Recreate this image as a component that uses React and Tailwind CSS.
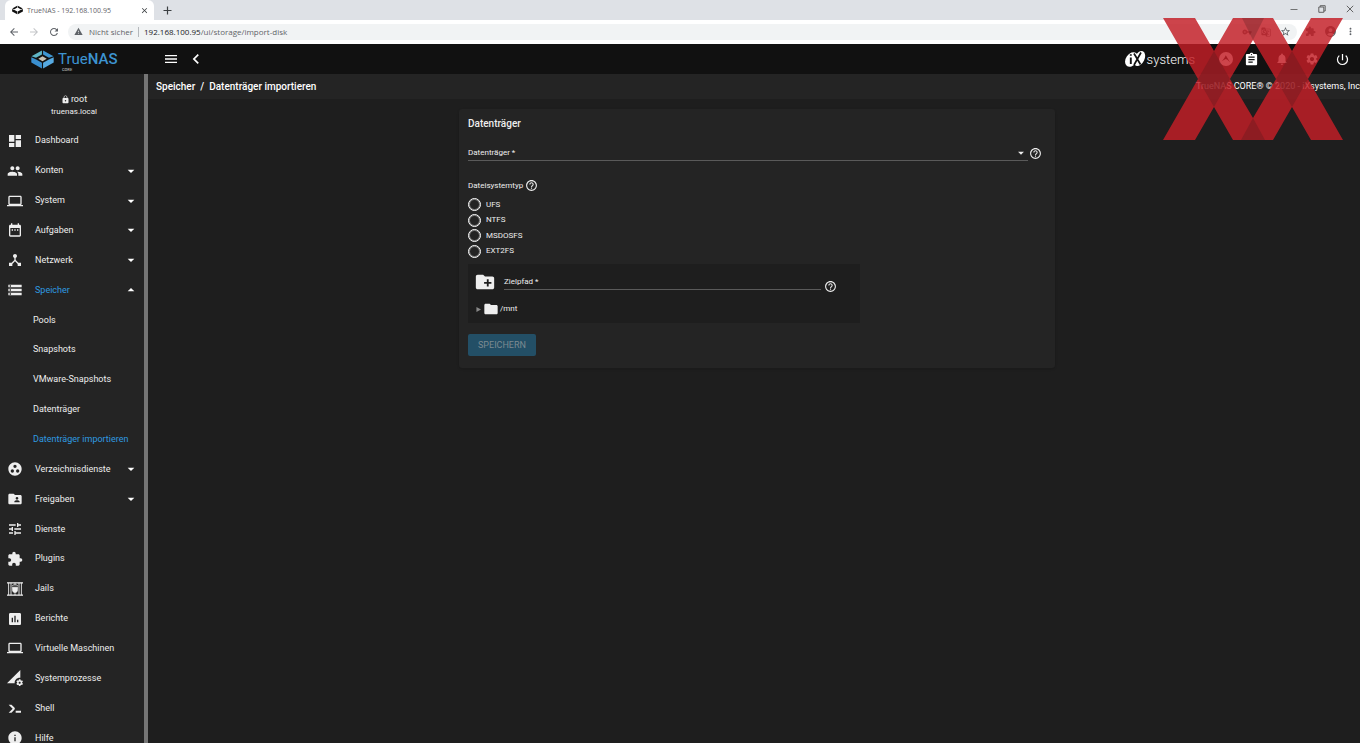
import { useState } from "react";
import {
  MdAccountCircle,
  MdArrowBack,
  MdArrowDropDown,
  MdArrowDropUp,
  MdArrowForward,
  MdAssessment,
  MdAssignment,
  MdChevronLeft,
  MdClose,
  MdComputer,
  MdCreateNewFolder,
  MdDashboard,
  MdDateRange,
  MdDeviceHub,
  MdExtension,
  MdFolder,
  MdFolderShared,
  MdGTranslate,
  MdGroupWork,
  MdHelpOutline,
  MdInfo,
  MdLock,
  MdMenu,
  MdMoreVert,
  MdNotifications,
  MdPeople,
  MdPermDataSetting,
  MdPowerSettingsNew,
  MdRefresh,
  MdSettings,
  MdStarBorder,
  MdStorage,
  MdTune,
  MdVpnKey,
  MdWarning,
} from "react-icons/md";

const JailIcon = ({ className }) => (
  <svg viewBox="0 0 18 16" fill="none" stroke="currentColor" className={className} aria-hidden="true">
    <path d="M0 1.200h18M0 14.800h18" strokeWidth="1.400" />
    <path d="M1.800 1v14M4.500 1v14M13.500 1v14M16.200 1v14" strokeWidth="1" />
    <path d="M9 1v2M9 13v2" strokeWidth="1" />
    <path d="M5.800 4.600C7 2.800 11 2.800 12.200 4.600" strokeWidth="1" />
    <path d="M6.200 6h5.600v2.800c0 2.200-1.400 3.400-2.800 3.400s-2.800-1.200-2.800-3.400z" fill="currentColor" strokeWidth="0.800" />
  </svg>
);

const ShellIcon = ({ className }) => (
  <svg viewBox="0 0 24 24" fill="currentColor" className={className} aria-hidden="true">
    <path d="M13 19v-3h8v3zM8.500 13 2.470 7H6.710L11.070 11.360a2.300 2.300 0 0 1 0 3.250L6.740 19H2.500z" />
  </svg>
);

const MENU = [
  { label: "Dashboard", icon: MdDashboard },
  { label: "Konten", icon: MdPeople, expandable: true },
  { label: "System", icon: MdComputer, expandable: true },
  { label: "Aufgaben", icon: MdDateRange, expandable: true },
  { label: "Netzwerk", icon: MdDeviceHub, expandable: true },
  { label: "Speicher", icon: MdStorage, expandable: true, open: true, active: true },
  { label: "Pools", child: true },
  { label: "Snapshots", child: true },
  { label: "VMware-Snapshots", child: true },
  { label: "Datenträger", child: true },
  { label: "Datenträger importieren", child: true, active: true },
  { label: "Verzeichnisdienste", icon: MdGroupWork, expandable: true },
  { label: "Freigaben", icon: MdFolderShared, expandable: true },
  { label: "Dienste", icon: MdTune },
  { label: "Plugins", icon: MdExtension },
  { label: "Jails", icon: JailIcon },
  { label: "Berichte", icon: MdAssessment },
  { label: "Virtuelle Maschinen", icon: MdComputer },
  { label: "Systemprozesse", icon: MdPermDataSetting },
  { label: "Shell", icon: ShellIcon },
  { label: "Hilfe", icon: MdInfo },
];

const FILESYSTEMS = ["UFS", "NTFS", "MSDOSFS", "EXT2FS"];

// Flat hexagonal ring of four facets around a small centre
const NasMark = ({ className, mono }) => (
  <svg viewBox="0 0 24 19" className={className} aria-hidden="true">
    <path d="M11.400 0v4.300L5.200 7.800.5 6z" fill={mono ? "#111" : "#5fb6c6"} />
    <path d="M12.600 0v4.300l6.200 3.500L23.500 6z" fill={mono ? "#111" : "#3f97d3"} />
    <path d="M0.300 7.200 5.400 9.400l6 3.600v5.800L0.300 12.600z" fill={mono ? "#111" : "#3a8fcf"} />
    <path d="M23.700 7.200 18.600 9.400l-6 3.600v5.800l11.100-6.200z" fill={mono ? "#111" : "#56a9e0"} />
    <path d="M12 6 16.400 8.700 12 11.400 7.600 8.700z" fill={mono ? "#fff" : "#c9c3b4"} />
  </svg>
);

const BrowserChrome = () => (
  <div className="shrink-0 font-['Open_Sans','Noto_Sans',sans-serif] text-[#5f6368]">
    <div className="flex h-5 items-center bg-[#dee1e6]">
      <div className="ml-[5px] flex h-full w-[149px] items-center rounded-t-md bg-white pr-[5px] pl-[7px]">
        <NasMark mono className="h-[10px] w-[11px]" />
        <span className="ml-1 flex-1 text-[7px] leading-none">TrueNAS - 192.168.100.95</span>
        <button type="button" aria-label="Tab schließen" className="text-[#3c4043]">
          <MdClose className="size-[9px]" />
        </button>
      </div>
      <button type="button" aria-label="Neuer Tab" className="ml-[9px] text-[#3c4043]">
        <svg viewBox="0 0 9 9" className="size-[9px]" stroke="currentColor" strokeWidth="1.200">
          <path d="M4.500 0.500v8M0.500 4.500h8" />
        </svg>
      </button>
      <div className="ml-auto flex h-full items-center gap-5 pr-[6px] pb-[3px] text-[#555]">
        <button type="button" aria-label="Minimieren">
          <svg viewBox="0 0 8 8" className="size-2" fill="none" stroke="currentColor" strokeWidth="0.800">
            <path d="M0.500 4.500h7" />
          </svg>
        </button>
        <button type="button" aria-label="Wiederherstellen">
          <svg viewBox="0 0 8 8" className="size-2" fill="none" stroke="currentColor" strokeWidth="0.900">
            <path d="M0.800 2h5v5.300h-5zM2.200 1.900V0.700h5v5.300H5.900" />
          </svg>
        </button>
        <button type="button" aria-label="Schließen">
          <svg viewBox="0 0 8 8" className="size-2" fill="none" stroke="currentColor" strokeWidth="0.900">
            <path d="M0.800 0.800l6.400 6.400M7.200 0.800 0.800 7.200" />
          </svg>
        </button>
      </div>
    </div>
    <div className="flex h-6 items-center bg-white pr-1 pb-px pl-2">
      <button type="button" aria-label="Zurück">
        <MdArrowBack className="size-3" />
      </button>
      <button type="button" aria-label="Vorwärts" className="ml-2 text-[#c3c5c8]">
        <MdArrowForward className="size-3" />
      </button>
      <button type="button" aria-label="Neu laden" className="ml-2">
        <MdRefresh className="size-3" />
      </button>
      <div className="ml-2 flex h-4 flex-1 items-center rounded-full bg-[#f1f3f4] pr-[6px] pl-[6px] text-[8px] leading-none">
        <MdWarning className="size-[9px]" />
        <span className="ml-[6px]">Nicht sicher</span>
        <span className="mx-[5px] h-[10px] w-px bg-[#b5b8bc]" />
        <span className="flex-1">
          <span className="text-[#202124]">192.168.100.95</span>/ui/storage/import-disk
        </span>
        <MdVpnKey className="size-[10px]" />
        <MdGTranslate className="ml-[9px] size-[10px]" />
        <MdStarBorder className="ml-[9px] size-[11px]" />
      </div>
      <div className="ml-2 flex items-center gap-2">
        <MdExtension className="size-[11px]" />
        <MdAccountCircle className="size-[13px]" />
        <MdMoreVert className="size-[11px]" />
      </div>
    </div>
  </div>
);

const IxLogo = () => (
  <div className="flex items-center gap-px text-white">
    <svg viewBox="0 0 22 18" className="h-[18px] w-[22px]" aria-hidden="true">
      <ellipse cx="7.500" cy="9.500" rx="5.600" ry="8" transform="rotate(35 7.500 9.500)" fill="white" />
      <ellipse cx="15.500" cy="8.500" rx="5" ry="8" transform="rotate(25 15.500 8.500)" fill="white" />
      <path d="M6.800 7.500v6.500M6.800 4.200v1.600" stroke="#111" strokeWidth="1.900" />
      <path d="M10 3.500l6.500 11M17 2.500 10 15" stroke="#111" strokeWidth="1.700" />
    </svg>
    <span className="text-[13px] leading-none font-light">systems</span>
  </div>
);

const TopBar = () => (
  <header className="flex h-[30px] shrink-0 items-center bg-[#111] pr-[10px] text-white">
    <a href="#dashboard" className="flex w-[163px] items-center pl-[31px]">
      <NasMark className="h-[19px] w-[23px]" />
      <span className="relative ml-1 text-[15px] leading-none text-[#3d94d1]">
        True<span className="font-medium">NAS</span>
        <span className="absolute top-4 left-1 text-[4px] leading-none font-medium text-[#b5b5b5]">CORE</span>
      </span>
    </a>
    <button type="button" aria-label="Menü">
      <MdMenu className="size-4" />
    </button>
    <button type="button" aria-label="Menü einklappen" className="ml-[7px]">
      <MdChevronLeft className="size-5" />
    </button>
    <div className="ml-auto flex items-center gap-4">
      <IxLogo />
      <div className="ml-2 flex items-center gap-4">
        <button type="button" aria-label="TrueCommand">
          <svg viewBox="0 0 14 14" className="size-[14px]">
            <circle cx="7" cy="7" r="7" fill="white" />
            <path d="M2 9.500C3.500 8.500 5 7 6.800 3.200l1.800 3 2.600 4.300-2.800-2.700-1.600-.8z" fill="#111" />
          </svg>
        </button>
        <button type="button" aria-label="Aufgaben" className="-ml-[5px]">
          <MdAssignment className="size-[15px]" />
        </button>
        <button type="button" aria-label="Benachrichtigungen">
          <MdNotifications className="size-[14px]" />
        </button>
        <button type="button" aria-label="Einstellungen">
          <MdSettings className="size-[14px]" />
        </button>
        <button type="button" aria-label="Ausschalten">
          <MdPowerSettingsNew className="size-[15px]" />
        </button>
      </div>
    </div>
  </header>
);

const MenuItem = ({ item }) => {
  const Icon = item.icon;
  const Arrow = item.open ? MdArrowDropUp : MdArrowDropDown;

  return (
    <li className="min-h-0">
      <a
        href={`#${item.label}`}
        className={`flex h-full items-center pr-[5px] text-[9px] leading-none ${
          item.child ? "pl-[33px]" : "pl-[7px]"
        } ${item.active ? "text-[#2f9be0]" : "text-[#eee]"}`}
      >
        {Icon && <Icon className="mr-3 size-4 text-[#eee]" />}
        <span className="flex-1 whitespace-nowrap">{item.label}</span>
        {item.expandable && <Arrow className="size-4 text-white" />}
      </a>
    </li>
  );
};

const Sidebar = () => (
  <aside className="w-[148px] shrink-0 overflow-hidden border-r-4 border-[#757575] bg-[#242424] text-[#eee]">
    <div className="flex h-[52px] flex-col items-center justify-end gap-[4px] pb-[10px] pl-1 leading-none">
      <div className="flex items-center gap-px text-[9px]">
        <MdLock className="size-[9px]" />
        root
      </div>
      <div className="text-[8px]">truenas.local</div>
    </div>
    <nav>
      <ul className="grid h-[627px] auto-rows-fr">
        {MENU.map((item) => (
          <MenuItem key={item.label} item={item} />
        ))}
      </ul>
    </nav>
  </aside>
);

const HelpButton = () => (
  <button type="button" aria-label="Hilfe" className="text-[#eee]">
    <MdHelpOutline className="size-[13px]" />
  </button>
);

const ImportDiskForm = () => {
  const [fsType, setFsType] = useState("");

  return (
    <form className="w-full max-w-[596px] rounded-[3px] bg-[#242424] px-[9px] pt-[10px] pb-3 text-[8px] leading-none text-[#eee] shadow-sm">
      <h2 className="text-[10px] leading-none font-medium">Datenträger</h2>

      <div className="mt-4 flex items-center gap-px pr-1">
        <div className="flex h-4 flex-1 items-center border-b border-[#5a5a5a]">
          <label htmlFor="disk">Datenträger *</label>
          <select id="disk" className="h-3 min-w-0 flex-1 appearance-none bg-transparent outline-none" />
          <MdArrowDropDown className="size-[14px]" />
        </div>
        <HelpButton />
      </div>

      <fieldset className="mt-[18px]">
        <legend className="flex items-center gap-[2px]">
          Dateisystemtyp
          <HelpButton />
        </legend>
        <div className="mt-[5px] flex h-[62px] flex-col justify-between">
          {FILESYSTEMS.map((fs) => (
            <label key={fs} className="flex h-[15px] items-center gap-[5px]">
              <input
                type="radio"
                name="fs-type"
                value={fs}
                checked={fsType === fs}
                onChange={() => setFsType(fs)}
                className="size-[13px] appearance-none rounded-full border border-white ring-1 ring-white/40 ring-inset checked:bg-[#2f9be0]"
              />
              {fs}
            </label>
          ))}
        </div>
      </fieldset>

      {/* Target path picker */}
      <div className="mt-[5px] h-[59px] w-[392px] max-w-full bg-[#1e1e1e] px-[6px] pt-[7px]">
        <div className="flex items-center">
          <MdCreateNewFolder className="size-[22px]" />
          <div className="ml-2 flex h-4 flex-1 items-center border-b border-[#5a5a5a]">
            <label htmlFor="path">Zielpfad *</label>
            <input id="path" type="text" className="h-3 min-w-0 flex-1 bg-transparent outline-none" />
          </div>
          <div className="mt-2 mr-[17px] ml-[3px] flex">
            <HelpButton />
          </div>
        </div>
        <button type="button" className="mt-[8px] flex items-center">
          <svg viewBox="0 0 6 6" className="ml-[2px] size-[5px] text-[#888]" fill="currentColor">
            <path d="M0.500 0 6 3 0.500 6z" />
          </svg>
          <MdFolder className="ml-[2px] size-4" />
          <span className="ml-px">/mnt</span>
        </button>
      </div>

      <button
        type="submit"
        disabled
        className="mt-[11px] h-[22px] rounded-[2px] bg-[#234f66] px-[10px] text-[9px] leading-none text-[#7c8a91]"
      >
        SPEICHERN
      </button>
    </form>
  );
};

// Two crossed-bar letters laid over the top right corner
const Watermark = () => (
  <svg
    viewBox="0 0 180 122"
    className="pointer-events-none absolute top-[18px] right-[17px] h-[122px] w-[180px]"
    aria-hidden="true"
  >
    <path
      d="M0 0H32L51 33 70 0H110L129 33 148 0H180L145 61 180 122H148L129 89 110 122H70L51 89 32 122H0L35 61zM90 22 67 61 90 100 113 61z"
      fillRule="evenodd"
      fill="#c31e26"
      fillOpacity="0.83"
    />
    <path
      d="M51 33 67 61 51 89 35 61zM129 33 145 61 129 89 113 61zM79 0H101L90 22zM90 100 102 122H78z"
      fill="#4a1a1e"
      fillOpacity="0.28"
    />
  </svg>
);

export default function App() {
  return (
    <div className="relative flex h-screen flex-col overflow-hidden bg-[#1e1e1e] font-[Roboto,sans-serif]">
      <BrowserChrome />
      <TopBar />
      <div className="flex min-h-0 flex-1">
        <Sidebar />
        <main className="min-w-0 flex-1">
          <div className="flex h-[25px] items-center bg-[#242424] pl-2 text-[10px] leading-none font-medium text-white">
            <a href="#speicher">Speicher</a>
            <span className="mx-[5px]">/</span>
            <span>Datenträger importieren</span>
            <span className="ml-auto text-[9px] font-normal whitespace-nowrap">
              TrueNAS CORE® © 2020 - iXsystems, Inc
            </span>
          </div>
          <div className="flex justify-center pt-[10px] pl-[6px]">
            <ImportDiskForm />
          </div>
        </main>
      </div>
      <Watermark />
    </div>
  );
}
